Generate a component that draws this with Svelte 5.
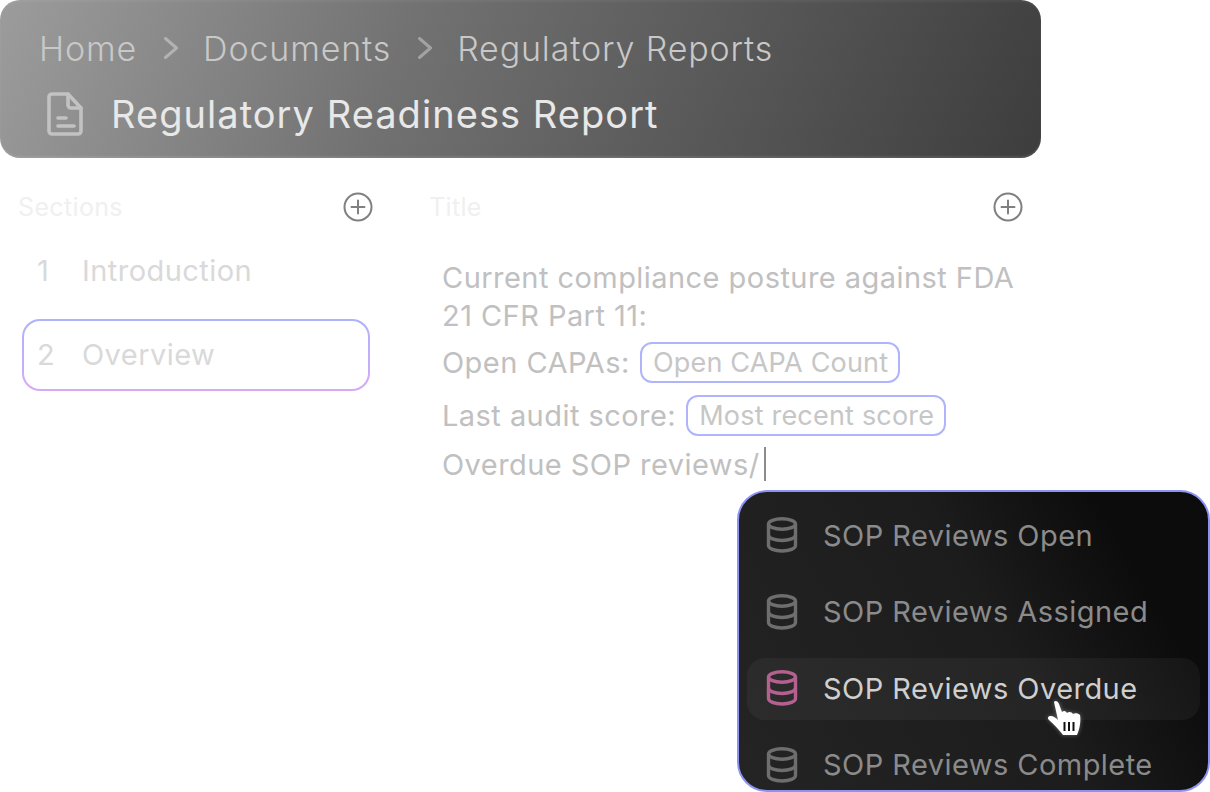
<script>
  const crumbs = ['Home', 'Documents', 'Regulatory Reports'];
  const sections = [
    { num: 1, name: 'Introduction' },
    { num: 2, name: 'Overview', active: true }
  ];
  const options = [
    { name: 'SOP Reviews Open' },
    { name: 'SOP Reviews Assigned' },
    { name: 'SOP Reviews Overdue', hover: true },
    { name: 'SOP Reviews Complete' }
  ];
</script>

{#snippet plus()}
  <svg class="plus" width="30" height="30" viewBox="0 0 30 30" fill="none" stroke="currentColor" stroke-width="2">
    <circle cx="15" cy="15" r="13.5" />
    <path d="M15 8.5v13M8.5 15h13" stroke-linecap="round" />
  </svg>
{/snippet}

<div class="page">
  <header class="top">
    <nav class="crumbs">
      {#each crumbs as crumb, i}
        {#if i > 0}
          <svg class="chev" width="16" height="24" viewBox="0 0 16 24" fill="none" stroke="currentColor" stroke-width="3">
            <path d="M3.500 2.500 14.500 12 3.500 21.500" stroke-linecap="round" stroke-linejoin="round" />
          </svg>
        {/if}
        <span class="crumb" class:last={i === crumbs.length - 1}>{crumb}</span>
      {/each}
    </nav>
    <div class="doc-title">
      <svg class="doc" width="36" height="44" viewBox="0 0 36 44" fill="none" stroke="currentColor" stroke-width="3.6" stroke-linejoin="round" stroke-linecap="round">
        <path d="M5 2h16l13 14v23a3 3 0 0 1-3 3H5a3 3 0 0 1-3-3V5a3 3 0 0 1 3-3Z" />
        <path d="M21 2v11a3 3 0 0 0 3 3h10" />
        <path d="M11 26h8M11 34h16" />
      </svg>
      <h1>Regulatory Readiness Report</h1>
    </div>
  </header>

  <main class="body">
    <section class="sections">
      <div class="head">
        <span>Sections</span>
        {@render plus()}
      </div>
      <ul>
        {#each sections as s}
          <li class:active={s.active}>
            <span class="num">{s.num}</span>
            <span>{s.name}</span>
          </li>
        {/each}
      </ul>
    </section>

    <section class="editor">
      <div class="head">
        <span>Title</span>
        {@render plus()}
      </div>
      <div class="text">
        <p class="intro">Current compliance posture against FDA 21 CFR Part 11:</p>
        <p class="line first">Open CAPAs: <span class="chip">Open CAPA Count</span></p>
        <p class="line second">Last audit score: <span class="chip">Most recent score</span></p>
        <p class="line third">Overdue SOP reviews/<span class="caret"></span></p>
      </div>
    </section>
  </main>

  <div class="menu">
    {#each options as o}
      <div class="option" class:hover={o.hover}>
        <svg width="32" height="36" viewBox="0 0 32 36" fill="none" stroke="currentColor" stroke-width="3.4">
          <ellipse cx="16" cy="7" rx="13.5" ry="5.2" />
          <path d="M2.500 7v21.500c0 3 6 5.500 13.500 5.500s13.500-2.500 13.500-5.500V7" />
          <path d="M2.500 18c0 3 6 5.500 13.500 5.500S29.500 21 29.500 18" />
        </svg>
        <span>{o.name}</span>
      </div>
    {/each}
  </div>

  <svg class="cursor" width="40" height="42" viewBox="0 0 40 42">
    <path fill="#fff" d="M9 4C10 2 13 3 14 6L17 14C19 12 21 13 22 15C24 13 27 14 28 16C30 14.500 33 15 35 17C36 22 35 30 32 37L18 37C15 33 10 27 4 22C2 20 3 18 6 18C8 18 11 20 13 22Z" />
    <path stroke="#111" stroke-width="2" d="M19.500 24v9M24 24v9M28.500 24v9" />
  </svg>
</div>

<style>
  :global(body) {
    margin: 0;
    background: #fff;
  }

  .page {
    position: relative;
    width: 1210px;
    height: 792px;
    overflow: hidden;
    background: #fff;
    font-family: Inter, "Liberation Sans", sans-serif;
    letter-spacing: 0.45px;
  }

  .top {
    box-sizing: border-box;
    width: 1041px;
    height: 158px;
    padding: 28px 0 0 39px;
    border-radius: 20px;
    background: linear-gradient(112deg, #9c9c9c 0%, #727272 38%, #3d3d3d 100%);
    box-shadow: inset 0 -2px 2px rgba(255, 255, 255, 0.1), inset 0 2px 2px rgba(255, 255, 255, 0.05);
  }

  .crumbs {
    display: flex;
    align-items: center;
    gap: 25px;
    height: 40px;
    font-size: 34px;
    font-weight: 300;
    letter-spacing: 0.85px;
    color: #c8c8c8;
  }

  .chev {
    color: rgba(255, 255, 255, 0.35);
  }

  .doc-title {
    display: flex;
    align-items: center;
    gap: 28px;
    margin: 22px 0 0 8px;
  }

  .doc {
    flex: none;
    color: #c2c2c2;
  }

  h1 {
    margin: 0;
    font-size: 38px;
    font-weight: 400;
    line-height: 48px;
    letter-spacing: 1.05px;
    color: #e8e8e8;
  }

  .body {
    display: grid;
    grid-template-columns: 355px 594px;
    gap: 56px;
    padding: 34px 0 0 18px;
  }

  .head {
    display: flex;
    align-items: center;
    justify-content: space-between;
    height: 30px;
    font-size: 25px;
    letter-spacing: 0.35px;
    color: #f0f0f0;
  }

  .plus {
    color: #808080;
  }

  ul {
    list-style: none;
    margin: 0;
    padding: 13px 0 0 4px;
    display: flex;
    flex-direction: column;
    gap: 12px;
  }

  li {
    box-sizing: border-box;
    display: flex;
    align-items: center;
    width: 348px;
    height: 72px;
    padding: 0 0 2px 13px;
    border: 2px solid transparent;
    border-radius: 18px;
    font-size: 29px;
    color: #d9d9d9;
  }

  li.active {
    background: linear-gradient(#fff, #fff) padding-box, linear-gradient(#adb3fc, #d6a9f6) border-box;
  }

  .num {
    width: 45px;
  }

  .text {
    padding: 37px 0 0 13px;
    font-size: 29px;
    color: #c0c0c0;
  }

  p {
    margin: 0;
  }

  .intro {
    max-width: 580px;
    line-height: 38px;
  }

  .line {
    display: flex;
    align-items: center;
    gap: 1.5px;
    white-space: pre;
  }

  .first {
    margin-top: 7px;
  }

  .second {
    margin-top: 12px;
  }

  .third {
    margin-top: 9px;
    gap: 0;
    height: 38px;
  }

  .chip {
    box-sizing: border-box;
    display: inline-flex;
    align-items: center;
    height: 41px;
    padding: 0 10px 0 11px;
    border: 2px solid #b0b5fb;
    border-radius: 12px;
    font-size: 27px;
    letter-spacing: 0.2px;
    color: #c6c6c6;
  }

  .caret {
    width: 2px;
    height: 34px;
    margin-left: 4px;
    background: #8c8c8c;
  }

  .menu {
    position: absolute;
    left: 737px;
    top: 490px;
    box-sizing: border-box;
    width: 473px;
    height: 302px;
    padding: 12.5px 8px 0;
    display: flex;
    flex-direction: column;
    gap: 14.67px;
    overflow: hidden;
    border: 2px solid #8d93f3;
    border-radius: 30px;
    background: linear-gradient(60deg, #242424 0%, #1c1c1c 55%, #0c0c0c 82%);
  }

  .option {
    flex: none;
    box-sizing: border-box;
    display: flex;
    align-items: center;
    gap: 25px;
    height: 62px;
    padding: 0 0 1px 19px;
    border-radius: 18px;
    font-size: 29px;
    color: #8b8b8b;
  }

  .option svg {
    flex: none;
    color: #6e6e6e;
  }

  .option.hover {
    background: rgba(255, 255, 255, 0.045);
    color: #cfcfcf;
  }

  .option.hover svg {
    color: #b4618f;
  }

  .cursor {
    position: absolute;
    left: 1045px;
    top: 698px;
    filter: drop-shadow(0 0 2px rgba(255, 255, 255, 0.35));
  }
</style>
